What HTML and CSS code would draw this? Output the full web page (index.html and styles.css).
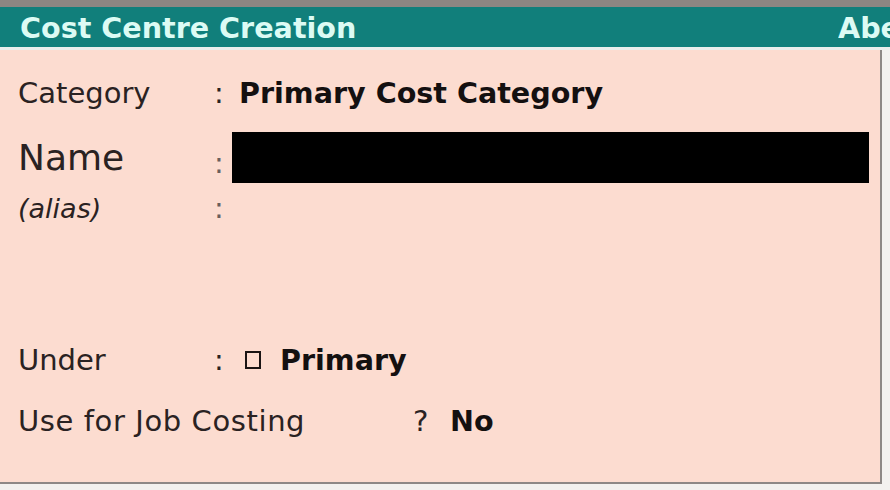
FILE: index.html
```html
<!DOCTYPE html>
<html>
<head>
<meta charset="utf-8">
<link rel="stylesheet" href="styles.css">
</head>
<body>
<div class="topstrip"></div>
<div class="header">
  <span class="title">Cost Centre Creation</span>
  <span class="title right">Abe</span>
</div>
<div class="sep"></div>
<div class="panel">
  <div class="row r-cat">
    <span class="label">Category</span>
    <span class="colon">:</span>
    <span class="value bold">Primary Cost Category</span>
  </div>
  <div class="row r-name">
    <span class="label name">Name</span>
    <span class="colon light">:</span>
    <span class="namebox"></span>
  </div>
  <div class="row r-alias">
    <span class="label alias">(alias)</span>
    <span class="colon light">:</span>
    <span class="value"></span>
  </div>
  <div class="row r-under">
    <span class="label">Under</span>
    <span class="colon">:</span>
    <span class="value under"><span class="sq"></span><span class="bold">Primary</span></span>
  </div>
  <div class="row r-job">
    <span class="label joblabel">Use for Job Costing</span>
    <span class="q">?</span>
    <span class="bold no">No</span>
  </div>
</div>
</body>
</html>
```
FILE: styles.css
```css
html, body {
  margin: 0;
  padding: 0;
}
body {
  width: 890px;
  height: 490px;
  overflow: hidden;
  background: #f3f1ef;
  font-family: "DejaVu Sans", sans-serif;
  color: #2a2222;
}
.topstrip {
  height: 7px;
  background: #8c8682;
}
.header {
  height: 40px;
  box-sizing: border-box;
  padding-top: 3px;
  background: #117f7b;
  display: flex;
  justify-content: space-between;
  align-items: center;
  padding-left: 20px;
  overflow: hidden;
}
.title {
  color: #dcfbf4;
  font-weight: bold;
  font-size: 28.6px;
  line-height: 37px;
  white-space: nowrap;
}
.title.right {
  width: 52px;
  overflow: hidden;
}
.sep {
  height: 3px;
  background: #e9eeec;
}
.panel {
  width: 882px;
  height: 434px;
  box-sizing: border-box;
  background: #fcdcd0;
  border-right: 2px solid #8e8886;
  border-bottom: 2px solid #8e8886;
  padding-left: 18px;
  display: flex;
  flex-direction: column;
}
.row {
  display: flex;
  align-items: center;
  height: 40px;
  font-size: 29px;
  white-space: nowrap;
}
.label {
  width: 196px;
}
.colon {
  width: 14px;
  text-align: left;
}
.colon.light {
  color: #6a5f5c;
}
.value {
  margin-left: 11px;
}
.bold {
  font-weight: bold;
  font-size: 28.6px;
  color: #141010;
}
.r-cat {
  margin-top: 23px;
}
.r-cat .value {
  margin-left: 11px;
}
.r-name {
  margin-top: 19px;
  height: 51px;
}
.name {
  font-size: 36px;
}
.namebox {
  width: 637px;
  height: 51px;
  margin-left: 4px;
  background: #000;
}
.r-name .colon {
  align-self: flex-end;
  line-height: 40px;
}
.r-alias {
  margin-top: 5px;
}
.alias {
  font-style: italic;
  font-size: 27px;
}
.r-under {
  margin-top: 112px;
}
.under {
  display: flex;
  align-items: center;
  margin-left: 17px;
}
.sq {
  width: 12px;
  height: 14px;
  border: 2px solid #1a1414;
  margin-right: 19px;
}
.r-job {
  margin-top: 21px;
}
.joblabel {
  width: 395px;
  letter-spacing: 0.6px;
}
.q {
  width: 37px;
}
```
